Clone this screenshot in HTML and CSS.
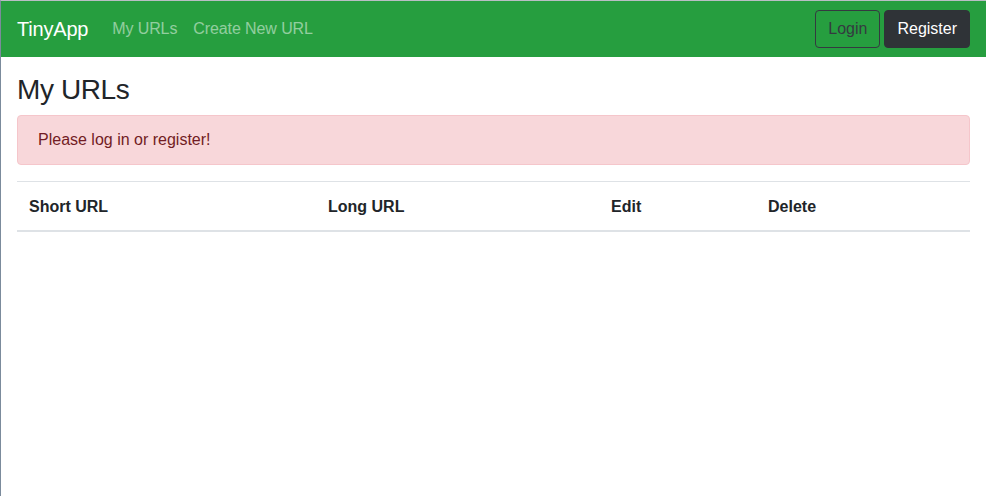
FILE: index.html
```html
<!DOCTYPE html>
<html>
<head>
<meta charset="utf-8">
<link rel="stylesheet" href="styles.css">
</head>
<body>
<div class="frame">
  <nav class="navbar">
    <a class="brand" href="#">TinyApp</a>
    <ul class="nav">
      <li><a class="nav-link" href="#">My URLs</a></li>
      <li><a class="nav-link" href="#">Create New URL</a></li>
    </ul>
    <div class="actions">
      <button class="btn btn-outline">Login</button>
      <button class="btn btn-dark">Register</button>
    </div>
  </nav>
  <main class="content">
    <h1 class="title">My URLs</h1>
    <div class="alert">Please log in or register!</div>
    <table class="table">
      <thead>
        <tr>
          <th class="c1">Short URL</th>
          <th class="c2">Long URL</th>
          <th class="c3">Edit</th>
          <th class="c4">Delete</th>
        </tr>
      </thead>
      <tbody></tbody>
    </table>
  </main>
</div>
</body>
</html>
```

FILE: styles.css
```css
* { box-sizing: border-box; }
html, body {
  margin: 0;
  padding: 0;
  height: 100%;
  background: #fff;
}
body {
  font-family: "Liberation Sans", Arial, sans-serif;
  font-size: 16px;
  line-height: 1.5;
  color: #212529;
}
.frame {
  min-height: 100%;
  height: 496px;
  border-top: 1px solid #b9bec4;
  border-left: 1px solid #7b8b9c;
}
.navbar {
  display: flex;
  align-items: center;
  height: 56px;
  padding: 8px 16px;
  background: #269e3f;
}
.brand {
  font-size: 20px;
  color: #fff;
  text-decoration: none;
  margin-right: 16px;
  line-height: 30px;
  letter-spacing: -0.2px;
}
.nav {
  display: flex;
  list-style: none;
  margin: 0;
  padding: 0;
}
.nav-link {
  display: block;
  padding: 8px;
  color: rgba(255, 255, 255, 0.5);
  text-decoration: none;
  letter-spacing: -0.1px;
}
.actions {
  margin-left: auto;
  display: flex;
  gap: 4px;
}
.btn {
  font-family: inherit;
  font-size: 16px;
  line-height: 24px;
  padding: 6px 12px;
  border-radius: 4px;
  border: 1px solid #343a40;
  height: 38px;
}
.btn-outline {
  background: transparent;
  color: #343a40;
}
.btn-dark {
  background: #2f3337;
  border-color: #2f3337;
  color: #fff;
}
.content {
  padding: 16px 16px 0;
}
.title {
  font-size: 28px;
  font-weight: 500;
  line-height: 1.2;
  margin: 0 0 8px;
  letter-spacing: -0.4px;
}
.alert {
  background: #f8d7da;
  border: 1px solid #f5c6cb;
  color: #721c24;
  border-radius: 4px;
  padding: 12px 20px;
  margin-bottom: 16px;
}
.table {
  width: 100%;
  border-collapse: collapse;
}
.table th {
  text-align: left;
  padding: 13px 12px 11px;
  border-top: 1px solid #dee2e6;
  border-bottom: 2px solid #dee2e6;
  font-weight: bold;
}
.c1 { width: 299px; }
.c2 { width: 283px; }
.c3 { width: 157px; }
```
